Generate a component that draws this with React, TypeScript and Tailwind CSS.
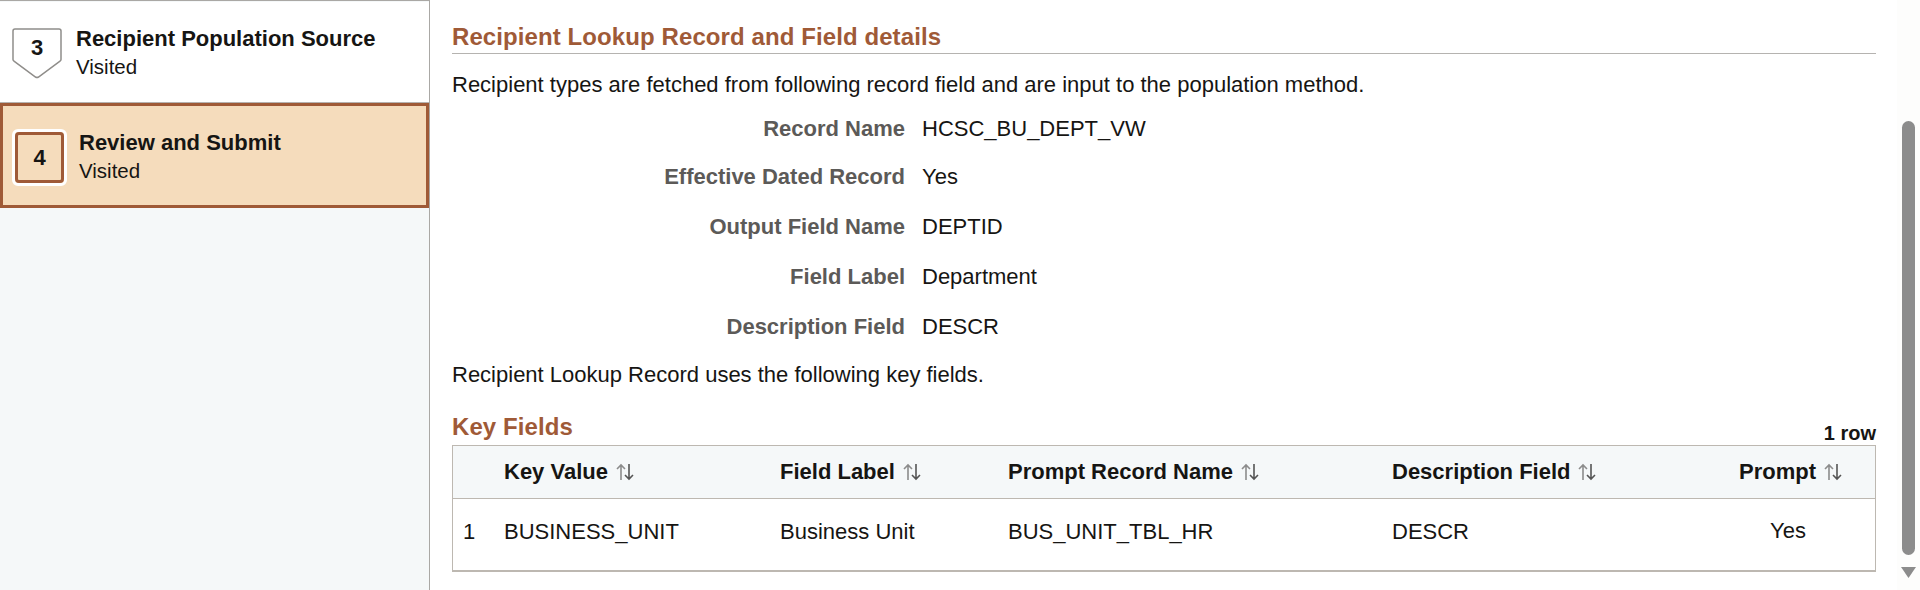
import React from 'react';

const details = [
  { label: 'Record Name', value: 'HCSC_BU_DEPT_VW', h: 'h-[48px]' },
  { label: 'Effective Dated Record', value: 'Yes', h: 'h-[50px]' },
  { label: 'Output Field Name', value: 'DEPTID', h: 'h-[50px]' },
  { label: 'Field Label', value: 'Department', h: 'h-[50px]' },
  { label: 'Description Field', value: 'DESCR', h: 'h-[50px]' },
];

const SortIcon = () => (
  <svg width="18" height="18" viewBox="0 0 18 18" fill="none" className="ml-[8px] shrink-0">
    <path d="M5 17V2M1 6l4-4 4 4" stroke="#8c8c8c" strokeWidth="1.6" />
    <path d="M13 1v15M9 12l4 4 4-4" stroke="#555555" strokeWidth="1.6" />
  </svg>
);

const HeaderCell = ({ label }: { label: string }) => (
  <div className="flex items-center">
    <span>{label}</span>
    <SortIcon />
  </div>
);

export default function App() {
  return (
    <div className="flex h-[590px] w-[1920px] overflow-hidden bg-white font-['Liberation_Sans',Arial,sans-serif] text-[#161513]">
      <aside className="w-[430px] shrink-0 border-t border-r border-[#aaa8a5] bg-[#f5f8f9] pt-px">
        <div className="flex h-[101px] items-start border-b border-[#b5b3b0] bg-white pl-3 pt-[26px]">
          <div className="relative flex h-[51px] w-[50px] shrink-0 justify-center pt-[7px] text-[22px] font-bold leading-[26px]">
            <svg width="50" height="51" viewBox="0 0 50 51" fill="none" className="absolute inset-0">
              <path d="M3 1h44a2 2 0 0 1 2 2v28.500a2 2 0 0 1-1 1.700L26.500 49a3 3 0 0 1-3 0L2 33.200a2 2 0 0 1-1-1.700V3a2 2 0 0 1 2-2Z" fill="#fff" stroke="#8f8d8a" strokeWidth="1.500" />
            </svg>
            <span className="relative">3</span>
          </div>
          <div className="ml-[14px] -mt-[2px]">
            <div className="text-[22px] font-bold leading-[26px]">Recipient Population Source</div>
            <div className="mt-[2px] text-[20.500px] leading-[26px]">Visited</div>
          </div>
        </div>
        <div className="flex h-[105px] items-start border-[3px] border-[#9f5a37] bg-[#f5dcbc] pl-[9px] pt-[23px]">
          <div className="flex h-[57px] w-[55px] shrink-0 items-center justify-center rounded-[6px] border-[3px] border-white">
            <div className="flex h-[51px] w-[49px] items-center justify-center rounded-[4px] border-[3px] border-[#9f5a37] text-[22px] font-bold">4</div>
          </div>
          <div className="ml-[12px] mt-px">
            <div className="text-[22px] font-bold leading-[26px]">Review and Submit</div>
            <div className="mt-[2px] text-[20.500px] leading-[26px]">Visited</div>
          </div>
        </div>
      </aside>

      <main className="w-[1467px] shrink-0 pl-[22px] pr-[21px] pt-[24px] text-[22px] leading-[26px]">
        <div className="h-[30px] border-b border-[#b5b3b0]">
          <h2 className="text-[24px] font-bold leading-[26px] tracking-[0.09px] text-[#9f5a37]">Recipient Lookup Record and Field details</h2>
        </div>
        <p className="mt-[18px]">Recipient types are fetched from following record field and are input to the population method.</p>
        <div className="mt-[18px]">
          {details.map((d) => (
            <div key={d.label} className={`flex items-start ${d.h}`}>
              <div className="w-[453px] text-right font-bold text-[#5c5a58]">{d.label}</div>
              <div className="ml-[17px]">{d.value}</div>
            </div>
          ))}
        </div>
        <p className="-mt-[2px]">Recipient Lookup Record uses the following key fields.</p>

        <div className="mt-[27px] flex h-[30px] items-end justify-between">
          <h3 className="mb-[5px] text-[24px] font-bold leading-[26px] tracking-[0.09px] text-[#9f5a37]">Key Fields</h3>
          <span className="text-[20px] font-bold leading-[24px]">1 row</span>
        </div>
        <div className="border border-b-2 border-[#bdb8b1]">
          <div className="grid h-[53px] grid-cols-[51px_276px_228px_384px_1fr] items-center border-b border-[#bdb8b1] bg-[#f5f8f9] font-bold">
            <div />
            <HeaderCell label="Key Value" />
            <HeaderCell label="Field Label" />
            <HeaderCell label="Prompt Record Name" />
            <div className="flex justify-between pr-[33px]">
              <HeaderCell label="Description Field" />
              <HeaderCell label="Prompt" />
            </div>
          </div>
          <div className="grid h-[71px] grid-cols-[51px_276px_228px_384px_1fr] items-center pb-[6px]">
            <div className="pl-[10px]">1</div>
            <div>BUSINESS_UNIT</div>
            <div>Business Unit</div>
            <div>BUS_UNIT_TBL_HR</div>
            <div className="flex justify-between pr-[69px]">
              <span>DESCR</span>
              <span className="-mt-px">Yes</span>
            </div>
          </div>
        </div>
      </main>

      <div className="flex w-[23px] shrink-0 flex-col items-center bg-[#fdfdfc]">
        <div className="mt-[121px] h-[434px] w-[13px] rounded-full bg-[#8c8c8c]" />
        <svg width="15" height="11" viewBox="0 0 15 11" className="mt-[12px]">
          <path d="M0 0h15L7.500 11Z" fill="#8c8c8c" />
        </svg>
      </div>
    </div>
  );
}
